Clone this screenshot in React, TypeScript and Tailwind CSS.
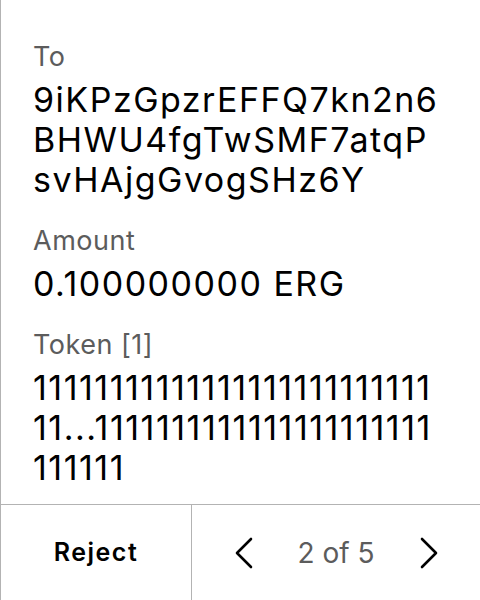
import React from "react";

function Field({ label, value, first }: { label: string; value: string; first?: boolean }) {
  return (
    <div className={first ? "flex flex-col" : "flex flex-col mt-[25px]"}>
      <div className="text-[27px] leading-[32px] tracking-[0.5px] text-[#5c5c5c]">{label}</div>
      <div className="mt-[7px] text-[34px] leading-[40px] tracking-[1.5px] text-black break-all">{value}</div>
    </div>
  );
}

export default function App() {
  return (
    <div
      className="w-[480px] h-[600px] bg-white flex flex-col border-l border-[#b3b3b3] overflow-hidden"
      style={{ fontFamily: "Inter, 'Noto Sans', sans-serif" }}
    >
      <div className="flex-1 pl-[32px] pr-[40px] pt-[41px] flex flex-col">
        <Field first label="To" value="9iKPzGpzrEFFQ7kn2n6BHWU4fgTwSMF7atqPsvHAjgGvogSHz6Y" />
        <Field label="Amount" value="0.100000000 ERG" />
        <Field
          label="Token [1]"
          value="1111111111111111111111111111...1111111111111111111111111111"
        />
      </div>
      <div className="h-[96px] border-t border-[#b3b3b3] flex">
        <div className="w-[191px] border-r border-[#b3b3b3] flex items-center justify-center text-[25px] tracking-[1.5px] font-semibold text-black">
          Reject
        </div>
        <div className="flex-1 flex items-center justify-center gap-[44px]">
          <svg width="20" height="32" viewBox="0 0 20 32" fill="none" stroke="black" strokeWidth="2.6" strokeLinecap="round" strokeLinejoin="round">
            <path d="M17 2 L3 16 L17 30" />
          </svg>
          <span className="text-[28px] text-[#5c5c5c]">2 of 5</span>
          <svg width="20" height="32" viewBox="0 0 20 32" fill="none" stroke="black" strokeWidth="2.6" strokeLinecap="round" strokeLinejoin="round">
            <path d="M3 2 L17 16 L3 30" />
          </svg>
        </div>
      </div>
    </div>
  );
}
